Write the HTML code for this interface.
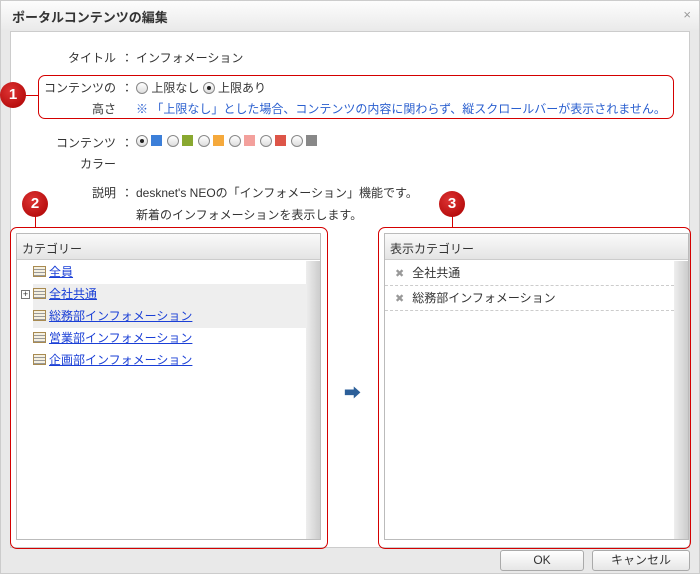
<!DOCTYPE html>
<html><head><meta charset="utf-8"><style>
*{box-sizing:border-box;margin:0;padding:0}
body{width:700px;height:574px;background:#fff;font-family:"Liberation Sans","Noto Sans CJK JP",sans-serif;font-size:12px;color:#333;position:relative;overflow:hidden}
.a{position:absolute}
.lbl{position:absolute;text-align:right;width:110px;left:6px;white-space:nowrap}
.col{position:absolute;left:121px}
.red{position:absolute;border:1.5px solid #d40000;border-radius:7px}
.c{position:absolute;width:26px;height:26px;border-radius:50%;background:radial-gradient(circle at 40% 35%,#d33,#a00);color:#fff;font-weight:bold;font-size:15px;text-align:center;line-height:26px}
.rad{display:inline-block;width:12px;height:12px;border:1px solid #888;border-radius:50%;background:linear-gradient(#fff,#ddd);vertical-align:-2px;position:relative}
.rad.on::after{content:"";position:absolute;left:3px;top:3px;width:4px;height:4px;border-radius:50%;background:#222}
.sw{display:inline-block;width:11px;height:11px;vertical-align:-1px;margin:0 5px 0 3px}
.panel{position:absolute;border:1px solid #bbb;background:#fff}
.ph{height:26px;background:linear-gradient(#fafafa,#e4e4e4);border-bottom:1px solid #ccc;padding:6px 5px;font-size:12px}
.sb{position:absolute;right:0;top:27px;bottom:0;width:14px;background:linear-gradient(90deg,#eee,#ccc)}
.it{position:absolute;left:16px;height:22px;line-height:22px;color:#1a3fd6;text-decoration:underline}
.ic{display:inline-block;width:13px;height:11px;border:1px solid #a88a50;background:repeating-linear-gradient(#f5f0e0 0 2px,#999 2px 3px);vertical-align:-1px;margin-right:3px}
.ri{position:absolute;left:0;right:14px;height:25px;border-bottom:1px dashed #ccc;padding:4px 10px;line-height:16px}
.x{color:#999;margin-right:8px;font-size:11px}
.btn{position:absolute;top:550px;height:21px;border:1px solid #aaa;border-radius:3px;background:linear-gradient(#fff,#e6e6e6);text-align:center;line-height:19px;font-size:12px}
</style></head><body>
<div class="a" style="left:0;top:0;width:700px;height:574px;background:#e9e9e9;border:1px solid #ccc"></div>
<div class="a" style="left:1px;top:1px;width:698px;height:29px;background:linear-gradient(#fdfdfd,#eaeaea)"></div>
<div class="a" style="left:12px;top:7px;font-weight:bold;font-size:13px">ポータルコンテンツの編集</div>
<div class="a" style="right:9px;top:7px;color:#999;font-size:13px">×</div>
<div class="a" style="left:10px;top:31px;width:680px;height:517px;background:#fff;border:1px solid #ccc"></div>

<div class="lbl" style="top:49px">タイトル</div><div class="col" style="top:49px">：</div><div class="a" style="left:136px;top:49px">インフォメーション</div>
<div class="red" style="left:38px;top:75px;width:636px;height:44px"></div>
<div class="a" style="left:25px;top:95px;width:14px;border-top:1.5px solid #d40000"></div>
<div class="c" style="left:0;top:82px">1</div>
<div class="lbl" style="top:79px">コンテンツの</div><div class="col" style="top:79px">：</div>
<div class="a" style="left:136px;top:79px"><span class="rad"></span> 上限なし <span class="rad on"></span> 上限あり</div>
<div class="lbl" style="top:100px">高さ</div>
<div class="a" style="left:136px;top:100px;color:#2a5fcf">※ 「上限なし」とした場合、コンテンツの内容に関わらず、縦スクロールバーが表示されません。</div>

<div class="lbl" style="top:134px">コンテンツ</div><div class="col" style="top:134px">：</div>
<div class="a" style="left:136px;top:134px"><span class="rad on"></span><span class="sw" style="background:#3c7fd9"></span><span class="rad"></span><span class="sw" style="background:#89a830"></span><span class="rad"></span><span class="sw" style="background:#f5a93c"></span><span class="rad"></span><span class="sw" style="background:#f3a09c"></span><span class="rad"></span><span class="sw" style="background:#dd5548"></span><span class="rad"></span><span class="sw" style="background:#888"></span></div>
<div class="lbl" style="top:155px">カラー</div>

<div class="lbl" style="top:184px">説明</div><div class="col" style="top:184px">：</div>
<div class="a" style="left:136px;top:184px">desknet's NEOの「インフォメーション」機能です。</div>
<div class="a" style="left:136px;top:206px">新着のインフォメーションを表示します。</div>

<div class="red" style="left:10px;top:227px;width:318px;height:322px"></div>
<div class="a" style="left:35px;top:210px;height:18px;border-left:1.5px solid #d40000"></div>
<div class="c" style="left:22px;top:191px">2</div>
<div class="panel" style="left:16px;top:233px;width:305px;height:307px">
<div class="ph">カテゴリー</div><div class="sb"></div>
<div class="a" style="left:16px;top:50px;width:274px;height:44px;background:#eee"></div>
<div class="it" style="top:27px"><span class="ic"></span>全員</div>
<div class="a" style="left:4px;top:56px;width:9px;height:9px;border:1px solid #777;font-size:9px;line-height:7px;text-align:center">+</div>
<div class="it" style="top:49px"><span class="ic"></span>全社共通</div>
<div class="it" style="top:71px"><span class="ic"></span>総務部インフォメーション</div>
<div class="it" style="top:93px"><span class="ic"></span>営業部インフォメーション</div>
<div class="it" style="top:115px"><span class="ic"></span>企画部インフォメーション</div>
</div>

<div class="a" style="left:344px;top:379px;color:#2c5f99;font-size:17px;font-weight:bold">➡</div>

<div class="red" style="left:378px;top:227px;width:313px;height:322px"></div>
<div class="a" style="left:452px;top:210px;height:18px;border-left:1.5px solid #d40000"></div>
<div class="c" style="left:439px;top:191px">3</div>
<div class="panel" style="left:384px;top:233px;width:305px;height:307px">
<div class="ph">表示カテゴリー</div><div class="sb"></div>
<div class="ri" style="top:27px"><span class="x">✖</span>全社共通</div>
<div class="ri" style="top:52px"><span class="x">✖</span>総務部インフォメーション</div>
</div>

<div class="btn" style="left:500px;width:84px">OK</div>
<div class="btn" style="left:592px;width:98px">キャンセル</div>
</body></html>
